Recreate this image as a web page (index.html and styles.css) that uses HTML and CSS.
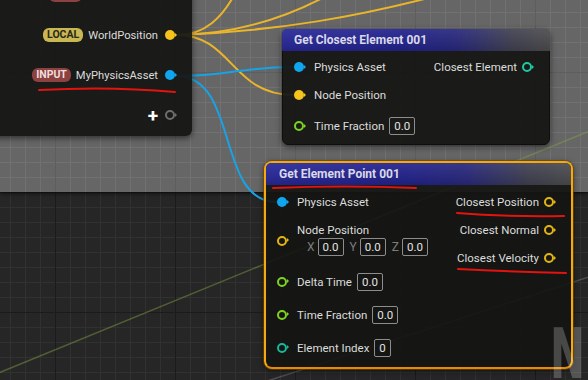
FILE: index.html
```html
<!DOCTYPE html>
<html lang="en">
<head>
  <meta charset="UTF-8">
  <meta name="viewport" content="width=device-width, initial-scale=1">
  <title>Niagara Graph - Get Element Point</title>
  <link rel="stylesheet" href="styles.css">
</head>
<body>
  <div class="graph">
    <!-- comment box behind the top nodes -->
    <div class="comment"></div>

    <!-- wires between pins -->
    <svg class="wires" width="588" height="380" viewBox="0 0 588 380">
      <path class="wire-faint-green" d="M-4 374 L592 130"/>
      <path class="wire-faint-grey" d="M258 384 L592 276"/>
      <path class="wire-yellow" d="M177 35 C205 35 222 18 236 -8"/>
      <path class="wire-yellow" d="M177 35 C240 34 290 16 330 -6"/>
      <path class="wire-yellow" d="M177 35 C280 31 360 16 440 -5"/>
      <path class="wire-yellow" d="M177 35 C232 35 232 95 293 95"/>
      <path class="wire-blue" d="M176 76 C230 76 240 67 293 67"/>
      <path class="wire-blue" d="M176 76 C240 76 215 202 277 202"/>
    </svg>

    <!-- parameter map node, cut off at the top left -->
    <div class="node node-params">
      <div class="param-row">
        <span class="badge badge-input badge-cut"></span>
        <span class="label-cut"></span>
        <span class="pin blue"></span>
      </div>
      <div class="param-row">
        <span class="badge badge-local">LOCAL</span>
        <span class="label">WorldPosition</span>
        <span class="pin yellow"></span>
      </div>
      <div class="param-row">
        <span class="badge badge-input">INPUT</span>
        <span class="label">MyPhysicsAsset</span>
        <span class="pin blue"></span>
      </div>
      <div class="param-row">
        <span class="add">+</span>
        <span class="pin hollow grey"></span>
      </div>
    </div>

    <!-- Get Closest Element -->
    <div class="node node-closest">
      <div class="node-header">Get Closest Element 001</div>
      <div class="node-body">
        <div class="pins">
          <div class="pin-row"><span class="pin blue"></span><span>Physics Asset</span></div>
          <div class="pin-row"><span class="pin yellow"></span><span>Node Position</span></div>
          <div class="pin-row pin-row-value"><span class="pin hollow green"></span><span>Time Fraction</span><span class="value">0.0</span></div>
        </div>
        <div class="pins pins-out">
          <div class="pin-row"><span>Closest Element</span><span class="pin hollow teal"></span></div>
        </div>
      </div>
    </div>

    <!-- Get Element Point (selected) -->
    <div class="node node-point">
      <div class="node-header">Get Element Point 001</div>
      <div class="node-body">
        <div class="pins">
          <div class="pin-row"><span class="pin blue"></span><span>Physics Asset</span></div>
          <div class="pin-row pin-block">
            <span class="pin hollow yellow-dim"></span>
            <div class="pin-stack">
              <span>Node Position</span>
              <div class="vector">
                <span class="axis">X</span><span class="value">0.0</span>
                <span class="axis">Y</span><span class="value">0.0</span>
                <span class="axis">Z</span><span class="value">0.0</span>
              </div>
            </div>
          </div>
          <div class="pin-row pin-row-tall"><span class="pin hollow green"></span><span>Delta Time</span><span class="value">0.0</span></div>
          <div class="pin-row pin-row-tall"><span class="pin hollow green"></span><span>Time Fraction</span><span class="value">0.0</span></div>
          <div class="pin-row pin-row-tall"><span class="pin hollow teal-dim"></span><span>Element Index</span><span class="value">0</span></div>
        </div>
        <div class="pins pins-out">
          <div class="pin-row"><span>Closest Position</span><span class="pin hollow yellow-dim"></span></div>
          <div class="pin-row"><span>Closest Normal</span><span class="pin hollow yellow-dim"></span></div>
          <div class="pin-row"><span>Closest Velocity</span><span class="pin hollow yellow-dim"></span></div>
        </div>
      </div>
    </div>

    <!-- red hand drawn underlines -->
    <svg class="marks" width="588" height="380" viewBox="0 0 588 380">
      <path d="M39 90 Q110 86 175 92"/>
      <path d="M273 188 Q345 185 416 188"/>
      <path d="M457 213 Q505 217 564 216"/>
      <path d="M458 269 Q515 272 566 273"/>
    </svg>

    <svg class="watermark" width="38" height="56" viewBox="0 0 38 56">
      <text x="1" y="54" textLength="35" lengthAdjust="spacingAndGlyphs">N</text>
    </svg>
  </div>
</body>
</html>
```

FILE: styles.css
```css
body {
  margin: 0;
  background-color: #262626;
  font-family: Roboto, "Liberation Sans", sans-serif;
}
.graph {
  position: relative;
  width: 588px;
  height: 380px;
  overflow: hidden;
  background-color: #262626;
  background-image:
    linear-gradient(#1b1b1b 1px, transparent 1px),
    linear-gradient(90deg, #1b1b1b 1px, transparent 1px),
    linear-gradient(#313131 1px, transparent 1px),
    linear-gradient(90deg, #313131 1px, transparent 1px);
  background-size: 120px 120px, 120px 120px, 15px 15px, 15px 15px;
  background-position: 0 72px, 55px 0, 0 12px, 10px 0;
}
.comment {
  height: 192px;
  background-color: #666666;
  background-image:
    linear-gradient(#5e5e5e 1px, transparent 1px),
    linear-gradient(90deg, #5e5e5e 1px, transparent 1px),
    linear-gradient(#717171 1px, transparent 1px),
    linear-gradient(90deg, #717171 1px, transparent 1px);
  background-size: 120px 120px, 120px 120px, 15px 15px, 15px 15px;
  background-position: 0 72px, 55px 0, 0 12px, 10px 0;
  box-shadow: 0 2px 4px rgba(0, 0, 0, 0.5);
}
.wires, .marks {
  position: absolute;
  left: 0;
  top: 0;
}
.wires path, .marks path {
  fill: none;
  stroke-linecap: round;
}
.wire-yellow {
  stroke: #eab52a;
  stroke-width: 2;
}
.wire-blue {
  stroke: #17a3e6;
  stroke-width: 2;
}
.wire-faint-green {
  stroke: rgba(130, 165, 70, 0.45);
  stroke-width: 1.5;
}
.wire-faint-grey {
  stroke: rgba(150, 150, 150, 0.35);
  stroke-width: 1.5;
}
.marks path {
  stroke: #e3140f;
  stroke-width: 2;
}

/* nodes */
.node {
  position: absolute;
  box-sizing: border-box;
  background-color: rgba(20, 21, 19, 0.93);
  border-radius: 6px;
  box-shadow: 0 2px 6px rgba(0, 0, 0, 0.55);
  color: #dcdcdc;
  font-size: 11.5px;
}
.node-params {
  left: -20px;
  top: -25px;
  width: 212px;
  height: 161px;
  padding-right: 15px;
  display: flex;
  flex-direction: column;
  align-items: flex-end;
}
.param-row {
  height: 40px;
  display: flex;
  align-items: center;
}
.param-row .label {
  margin-right: 7px;
  font-size: 11.2px;
}
.label-cut {
  width: 71px;
  margin-right: 7px;
}
.badge {
  height: 14px;
  padding: 0 4px;
  margin-right: 5px;
  border-radius: 6px;
  font-size: 10.5px;
  font-weight: bold;
  line-height: 14px;
}
.badge-cut {
  width: 25px;
}
.badge-local {
  background-color: #c9b753;
  color: #2a2817;
  padding: 0 4px;
}
.badge-input {
  background-color: #8d4242;
  color: #efdede;
}
.add {
  margin-right: 7px;
  color: #ffffff;
  font-size: 19px;
  font-weight: bold;
  line-height: 1;
}

.node-header {
  height: 22px;
  display: flex;
  align-items: center;
  padding-left: 11px;
  border-radius: 5px 5px 0 0;
  background-image:
    linear-gradient(180deg, rgba(255, 255, 255, 0.07), rgba(0, 0, 0, 0.12)),
    linear-gradient(90deg, #28289a 0%, #22228e 45%, #28287e 65%, #414152 86%, #4d4d4f 100%);
  color: #d9d9e8;
  font-size: 12px;
  font-weight: bold;
}
.node-body {
  display: flex;
  justify-content: space-between;
  padding: 2px 15px 0 11px;
}
.pins {
  display: flex;
  flex-direction: column;
}
.pins-out {
  align-items: flex-end;
}
.pin-row {
  height: 28px;
  display: flex;
  align-items: center;
  gap: 8px;
}
.pins-out .pin-row {
  gap: 5px;
}
.pin-row-value {
  margin-top: 3px;
}

.node-closest {
  left: 282px;
  top: 29px;
  width: 268px;
  height: 116px;
  border: 1px solid #0e0e0e;
}
.node-closest .node-header {
  margin: -1px -1px 0;
  padding-left: 12px;
}

.node-point {
  left: 264px;
  top: 161px;
  width: 309px;
  height: 208px;
  border: 2px solid #f3a90f;
  border-bottom-color: #e48a06;
  border-radius: 8px;
  box-shadow: 0 0 0 1px rgba(120, 70, 0, 0.6), 0 2px 6px rgba(0, 0, 0, 0.55);
}
.node-point .node-header {
  padding-left: 13px;
}
.node-point .node-body {
  padding-top: 3px;
}
.pin-block {
  height: 49px;
}
.pin-stack {
  display: flex;
  flex-direction: column;
  padding-bottom: 3px;
}
.pin-stack > span {
  height: 16px;
  line-height: 16px;
}
.vector {
  height: 18px;
  display: flex;
  align-items: center;
  padding-left: 10px;
}
.axis {
  margin-right: 3px;
  color: #7c7c7c;
  font-size: 12px;
}
.vector .value {
  margin-left: 0;
  margin-right: 6px;
}
.pin-row-tall {
  height: 33px;
}

.value {
  height: 18px;
  min-width: 26px;
  box-sizing: border-box;
  display: flex;
  align-items: center;
  justify-content: center;
  padding: 0 4px;
  border: 1px solid #8d8d8d;
  border-radius: 2px;
  margin-left: -3px;
  color: #e2e2e2;
}
.pin-row .value:last-child {
  min-width: 0;
}

/* pins */
.pin {
  position: relative;
  flex: none;
  width: 10px;
  height: 10px;
  margin-right: 2px;
  box-sizing: border-box;
  border-radius: 50%;
  background-color: currentColor;
}
.pin::after {
  content: "";
  position: absolute;
  left: 100%;
  top: 50%;
  margin-top: -2.5px;
  border-left: 2.5px solid currentColor;
  border-top: 2.5px solid transparent;
  border-bottom: 2.5px solid transparent;
}
.pin.hollow {
  background: none;
  border: 2px solid currentColor;
}
.pin.hollow::after {
  left: calc(100% + 2px);
}
.blue { color: #0fa6ef; }
.yellow { color: #f6c21c; }
.yellow-dim { color: #e3b512; }
.green { color: #7ed321; }
.teal { color: #1ec9a2; }
.teal-dim { color: #17b79a; }
.grey { color: #6e6e6e; }

.watermark {
  position: absolute;
  left: 549px;
  top: 324px;
}
.watermark text {
  fill: rgba(255, 255, 255, 0.22);
  font-family: "DejaVu Sans", sans-serif;
  font-size: 69px;
  font-weight: bold;
}
```
